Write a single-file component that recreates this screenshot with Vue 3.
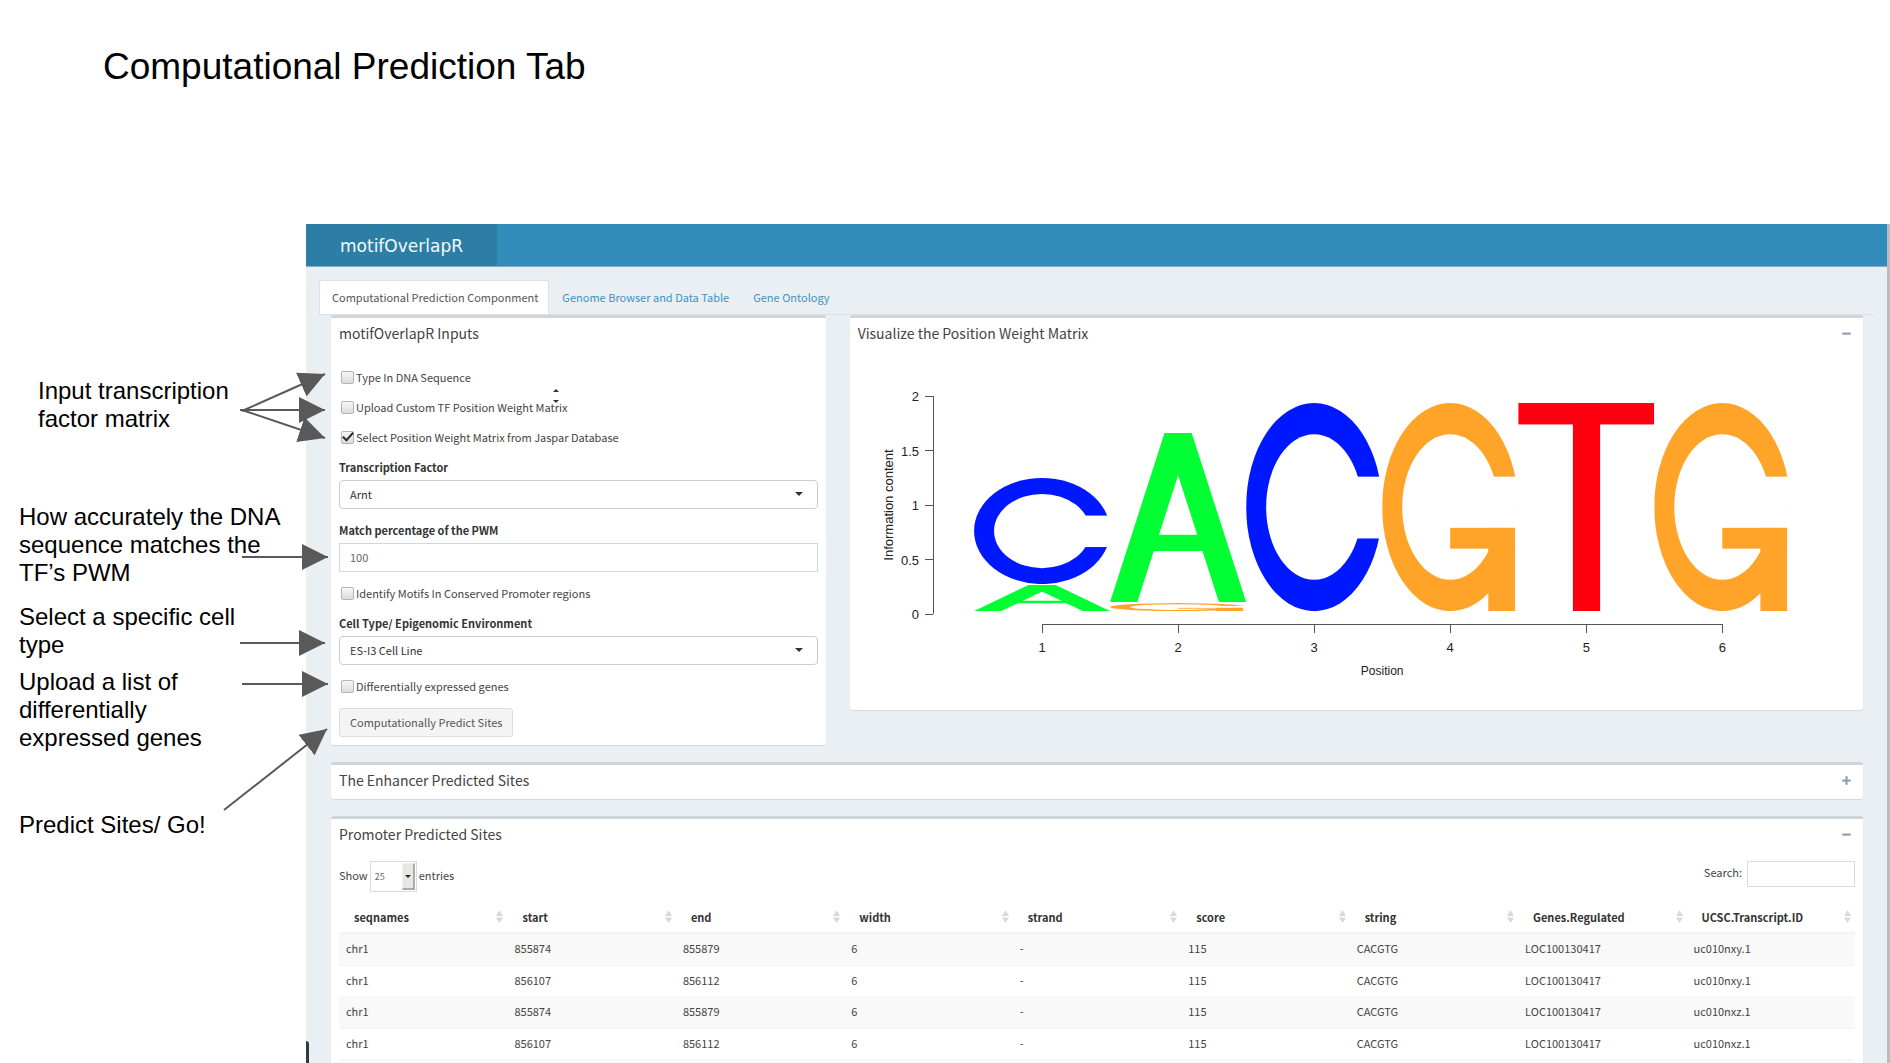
<script setup>
import { ref } from 'vue'

const notes = [
  { text: 'Input transcription\nfactor matrix', kind: 'first' },
  { text: 'How accurately the DNA\nsequence matches the\nTF’s PWM', kind: 'match' },
  { text: 'Select a specific cell\ntype', kind: 'cell' },
  { text: 'Upload a list of\ndifferentially\nexpressed genes', kind: 'genes' },
  { text: 'Predict Sites/ Go!', kind: 'go' },
]

const arrows = [
  [242, 411, 325, 374],
  [240, 410, 325, 410],
  [242, 410, 325, 438],
  [242, 557, 328, 557],
  [240, 643, 325, 643],
  [242, 684, 328, 684],
  [224, 810, 327, 729],
]

const tabs = ['Computational Prediction Componment', 'Genome Browser and Data Table', 'Gene Ontology']

const typeSequence = ref(false)
const uploadMatrix = ref(false)
const jaspar = ref(true)
const conserved = ref(false)
const diffGenes = ref(false)
const factor = ref('Arnt')
const match = ref('100')
const cell = ref('ES-I3 Cell Line')
const pageSize = ref('25')
const search = ref('')

// Plot geometry, in viewBox units
const zeroY = 262
const unitY = 109
const firstX = 184
const stepX = 136
const yTicks = [2, 1.5, 1, 0.5, 0]
const positions = [1, 2, 3, 4, 5, 6]
const px = (n) => firstX + (n - 1) * stepX
const py = (v) => zeroY - v * unitY

const colors = { A: '#00ff33', C: '#0018ff', G: '#ffa428', T: '#ff0010' }
const stacks = [
  { base: 'C', pos: 1, top: 126, height: 106 },
  { base: 'A', pos: 1, top: 233, height: 26 },
  { base: 'A', pos: 2, top: 81, height: 169 },
  { base: 'G', pos: 2, top: 251, height: 8 },
  { base: 'C', pos: 3, top: 51, height: 208 },
  { base: 'G', pos: 4, top: 51, height: 208 },
  { base: 'T', pos: 5, top: 51, height: 208 },
  { base: 'G', pos: 6, top: 51, height: 208 },
]

const columns = ['seqnames', 'start', 'end', 'width', 'strand', 'score', 'string', 'Genes.Regulated', 'UCSC.Transcript.ID']
const rows = [
  ['chr1', '855874', '855879', '6', '-', '115', 'CACGTG', 'LOC100130417', 'uc010nxy.1'],
  ['chr1', '856107', '856112', '6', '-', '115', 'CACGTG', 'LOC100130417', 'uc010nxy.1'],
  ['chr1', '855874', '855879', '6', '-', '115', 'CACGTG', 'LOC100130417', 'uc010nxz.1'],
  ['chr1', '856107', '856112', '6', '-', '115', 'CACGTG', 'LOC100130417', 'uc010nxz.1'],
]
</script>

<template>
  <div class="slide">
    <h1 class="slide-title">Computational Prediction Tab</h1>

    <div class="stage">
      <aside class="notes">
        <p v-for="n in notes" :key="n.kind" class="note" :class="n.kind">{{ n.text }}</p>
      </aside>

      <div class="app">
        <header class="topbar">
          <div class="brand">motifOverlapR</div>
        </header>

        <nav class="tabs">
          <a v-for="(t, i) in tabs" :key="t" href="#" class="tab" :class="{ active: i === 0 }">{{ t }}</a>
        </nav>

        <div class="row split">
          <section class="box">
            <div class="box-head"><h2>motifOverlapR Inputs</h2></div>
            <form class="form" @submit.prevent>
              <label class="check"><input v-model="typeSequence" type="checkbox" />Type In DNA Sequence</label>
              <label class="check"><input v-model="uploadMatrix" type="checkbox" />Upload Custom TF Position Weight Matrix
                <span class="spin"></span></label>
              <label class="check"><input v-model="jaspar" type="checkbox" />Select Position Weight Matrix from Jaspar Database</label>
              <div class="field">
                <label for="factor">Transcription Factor</label>
                <div class="picker">
                  <select id="factor" v-model="factor"><option>Arnt</option></select>
                </div>
              </div>
              <div class="field">
                <label for="match">Match percentage of the PWM</label>
                <input id="match" v-model="match" class="text" type="text" />
              </div>
              <label class="check"><input v-model="conserved" type="checkbox" />Identify Motifs In Conserved Promoter regions</label>
              <div class="field">
                <label for="cell">Cell Type/ Epigenomic Environment</label>
                <div class="picker">
                  <select id="cell" v-model="cell"><option>ES-I3 Cell Line</option></select>
                </div>
              </div>
              <label class="check"><input v-model="diffGenes" type="checkbox" />Differentially expressed genes</label>
              <button class="go-button" type="submit">Computationally Predict Sites</button>
            </form>
          </section>

          <section class="box">
            <div class="box-head">
              <h2>Visualize the Position Weight Matrix</h2>
              <button class="tool" type="button" aria-label="Collapse">
                <svg viewBox="0 0 8 8"><rect y="3" width="8" height="2" rx="1" /></svg>
              </button>
            </div>
            <svg class="plot" viewBox="0 0 997 350" role="img" aria-label="Sequence logo for CACGTG">
              <g class="axis">
                <line x1="75" :y1="py(2)" x2="75" :y2="py(0)" />
                <line v-for="v in yTicks" :key="v" x1="67" :y1="py(v)" x2="75" :y2="py(v)" />
                <line :x1="px(1)" y1="272" :x2="px(6)" y2="272" />
                <line v-for="p in positions" :key="p" :x1="px(p)" y1="272" :x2="px(p)" y2="281" />
              </g>
              <text v-for="v in yTicks" :key="'y' + v" class="num" x="61" :y="py(v) + 5" text-anchor="end">{{ v }}</text>
              <text v-for="p in positions" :key="'x' + p" class="num" :x="px(p)" y="300" text-anchor="middle">{{ p }}</text>
              <text class="num" text-anchor="middle" transform="translate(35 153) rotate(-90)">Information content</text>
              <text class="name" x="524" y="323" text-anchor="middle">Position</text>

              <!-- Information stacks: one mark per base, its height is the base's share -->
              <svg
                v-for="(s, i) in stacks"
                :key="i"
                :x="px(s.pos) - 68"
                :y="s.top"
                width="136"
                :height="s.height"
                viewBox="0 0 100 100"
                preserveAspectRatio="none"
                :fill="colors[s.base]"
                :stroke="colors[s.base]"
              >
                <g v-if="s.base === 'C' || s.base === 'G'" stroke="none">
                  <ellipse cx="50" cy="50" rx="50" ry="50" />
                  <ellipse cx="50" cy="50" rx="35.3" ry="35" fill="#fff" />
                  <rect x="50" y="35.4" width="54" height="29.7" fill="#fff" />
                  <template v-if="s.base === 'G'">
                    <rect x="50" y="60" width="47.8" height="10" />
                    <rect x="78" y="60" width="19.8" height="40" />
                    <rect x="97.8" y="35" width="6" height="65" fill="#fff" />
                  </template>
                </g>
                <g v-else-if="s.base === 'A'" stroke-width="18.6">
                  <line x1="54" y1="-10" x2="6" y2="110" />
                  <line x1="46" y1="-10" x2="94" y2="110" />
                  <rect x="30" y="60.2" width="40" height="9.6" stroke="none" />
                </g>
                <g v-else stroke="none">
                  <rect width="100" height="10.3" />
                  <rect x="40.2" width="20" height="100" />
                </g>
              </svg>
            </svg>
          </section>
        </div>

        <div class="row">
          <section class="box">
            <div class="box-head">
              <h2>The Enhancer Predicted Sites</h2>
              <button class="tool" type="button" aria-label="Expand">
                <svg viewBox="0 0 8 8"><rect y="3" width="8" height="2" rx="1" /><rect x="3" width="2" height="8" rx="1" /></svg>
              </button>
            </div>
          </section>
        </div>

        <div class="row">
          <section class="box">
            <div class="box-head">
              <h2>Promoter Predicted Sites</h2>
              <button class="tool" type="button" aria-label="Collapse">
                <svg viewBox="0 0 8 8"><rect y="3" width="8" height="2" rx="1" /></svg>
              </button>
            </div>
            <div class="controls">
              <label class="length">Show
                <span class="length-picker"><select v-model="pageSize"><option>25</option></select></span>
                entries</label>
              <label class="search">Search:<input v-model="search" type="search" /></label>
            </div>
            <table class="data">
              <thead>
                <tr>
                  <th v-for="c in columns" :key="c" scope="col">
                    <div class="th">
                      <span>{{ c }}</span>
                      <svg viewBox="0 0 7 13"><path d="M0 6 3.500 0 7 6zM0 7.500 3.500 13 7 7.500z" /></svg>
                    </div>
                  </th>
                </tr>
              </thead>
              <tbody>
                <tr v-for="(r, i) in rows" :key="i">
                  <td v-for="(v, j) in r" :key="j">{{ v }}</td>
                </tr>
                <tr aria-hidden="true"><td v-for="c in columns" :key="c"></td></tr>
              </tbody>
            </table>
          </section>
        </div>
        <span class="drawer"></span>
      </div>
    </div>

    <svg class="arrows" aria-hidden="true">
      <defs>
        <marker id="head" viewBox="0 0 26 26" refX="26" refY="13" markerWidth="26" markerHeight="26" markerUnits="userSpaceOnUse" orient="auto">
          <path d="M0 0 26 13 0 26z" fill="#595959" />
        </marker>
      </defs>
      <line v-for="(a, i) in arrows" :key="i" :x1="a[0]" :y1="a[1]" :x2="a[2]" :y2="a[3]" marker-end="url(#head)" />
    </svg>
  </div>
</template>

<style>
body {
  margin: 0;
  background: #fff;
}
</style>

<style scoped>
*,
*::before,
*::after {
  box-sizing: border-box;
}
.slide {
  position: relative;
  display: flex;
  flex-direction: column;
  height: 100vh;
  overflow: hidden;
  font-family: 'Liberation Sans', Arial, sans-serif;
  color: #000;
}
.slide-title {
  flex: none;
  margin: 0;
  padding: 47px 0 137px 103px;
  font-size: 37px;
  line-height: 40px;
  font-weight: 400;
}
.stage {
  flex: 1;
  min-height: 0;
  display: grid;
  grid-template-columns: 306px 1fr;
  grid-template-rows: minmax(0, 1fr);
}
.note {
  margin: 0 0 0 19px;
  font-size: 24px;
  line-height: 28px;
  white-space: pre-line;
}
.note.first {
  margin-top: 153px;
  margin-left: 38px;
}
.note.match {
  margin-top: 70px;
}
.note.cell {
  margin-top: 16px;
}
.note.genes {
  margin-top: 9px;
}
.note.go {
  margin-top: 59px;
}
.arrows {
  position: absolute;
  inset: 0;
  width: 100%;
  height: 100%;
  pointer-events: none;
}
.arrows line {
  stroke: #595959;
  stroke-width: 2;
}

.app {
  position: relative;
  min-width: 0;
  overflow: hidden;
  background: #e9eff3;
  border-right: 3px solid #b8bdbe;
  font-family: 'Noto Sans CJK SC', 'Noto Sans', sans-serif;
  font-size: 11px;
  line-height: 18px;
  color: #444;
}
.topbar {
  height: 43px;
  background: #318cb9;
  border-bottom: 1px solid #7cb0cc;
}
.brand {
  width: 191px;
  height: 42px;
  background: #2d7ea5;
  color: #f4fafd;
  font-family: 'DejaVu Sans', sans-serif;
  font-size: 17px;
  line-height: 44px;
  text-align: center;
}
.tabs {
  display: flex;
  margin: 13px 12px 0 13px;
  border-bottom: 1px solid #dde1e4;
}
.tab {
  padding: 7px 10px 8px 12px;
  border: 1px solid transparent;
  border-bottom: 0;
  border-radius: 3px 3px 0 0;
  color: #3f93c0;
  text-decoration: none;
}
.tab.active {
  background: #fff;
  border-color: #dde1e4;
  color: #555;
}
.row {
  margin: 0 12px 17px 13px;
  padding: 0 12px;
}
.split {
  padding: 0;
  display: grid;
  grid-template-columns: 1fr 2fr;
  align-items: start;
}
.split .box {
  margin: 0 12px;
}
.box {
  background: #fff;
  border-top: 3px solid #d0d5db;
  border-radius: 3px;
  box-shadow: 0 1px 1px rgba(0, 0, 0, 0.1);
}
.box-head {
  display: flex;
  justify-content: space-between;
  align-items: center;
  height: 34px;
  padding: 0 8px 4px;
}
h2 {
  margin: 0;
  font-size: 14px;
  line-height: 30px;
  font-weight: 400;
}
.tool {
  display: flex;
  padding: 4px;
  border: 0;
  background: none;
}
.tool svg {
  width: 9px;
  height: 9px;
  fill: #94a0b4;
}
.form {
  display: flex;
  flex-direction: column;
  align-items: stretch;
  gap: 12px;
  padding: 16px 8px 8px;
}
.check {
  position: relative;
  display: flex;
  align-items: center;
  gap: 2px;
  align-self: flex-start;
  padding-left: 2px;
}
.check input {
  appearance: none;
  position: relative;
  width: 13px;
  height: 13px;
  margin: 0;
  border: 1px solid #b4b4b4;
  border-radius: 2px;
  background: linear-gradient(#f6f6f6, #dcdcdc);
}
.check input:checked::after {
  content: '';
  position: absolute;
  left: 3px;
  top: -2px;
  width: 6px;
  height: 11px;
  border: solid #2b2b2b;
  border-width: 0 2px 2px 0;
  transform: rotate(42deg);
}
.spin {
  position: absolute;
  right: 8px;
  top: -9px;
  width: 6px;
  height: 14px;
}
.spin::before,
.spin::after {
  content: '';
  position: absolute;
  left: 0;
  border: 3px solid transparent;
}
.spin::before {
  top: -3px;
  border-bottom-color: #333;
}
.spin::after {
  bottom: -3px;
  border-top-color: #333;
}
.field {
  display: flex;
  flex-direction: column;
  gap: 4px;
}
.field label {
  font-weight: 700;
  color: #333;
}
.picker {
  position: relative;
}
select,
input,
button {
  font: inherit;
  color: inherit;
}
.picker select,
.text {
  display: block;
  width: 100%;
  height: 29px;
  padding: 0 10px 2px;
  border: 1px solid #ccc;
  background: #fff;
  outline: 0;
}
.picker select {
  appearance: none;
  border-radius: 4px;
  color: #333;
}
.text {
  border-color: #d2d6de;
  color: #666;
}
.picker::after {
  content: '';
  position: absolute;
  right: 15px;
  top: 12px;
  border: 4px solid transparent;
  border-top-color: #333;
  border-bottom: 0;
}
.go-button {
  align-self: flex-start;
  height: 29px;
  margin-top: 1px;
  padding: 0 10px 2px;
  border: 1px solid #ddd;
  border-radius: 3px;
  background: #f4f4f4;
  color: #555;
}
.plot {
  display: block;
  width: calc(100% - 16px);
  margin: 0 8px;
  padding-bottom: 8px;
  box-sizing: content-box;
  font-family: 'Liberation Sans', Arial, sans-serif;
}
.axis {
  stroke: #555;
  stroke-width: 1;
  shape-rendering: crispEdges;
}
.num {
  font-size: 13px;
  fill: #222;
}
.name {
  font-size: 12px;
  fill: #222;
}
.controls {
  display: flex;
  justify-content: space-between;
  align-items: flex-start;
  padding: 8px 8px 0;
}
.length,
.search {
  display: flex;
  align-items: flex-start;
}
.length {
  gap: 2px;
  line-height: 28px;
}
.search {
  gap: 5px;
  line-height: 23px;
}
.length-picker {
  position: relative;
}
.length-picker select {
  appearance: none;
  display: block;
  width: 47px;
  height: 31px;
  padding: 0 4px;
  border: 1px solid #d8dce0;
  background: #fff;
  font-size: 9px;
  color: #666;
}
.length-picker::before {
  content: '';
  position: absolute;
  right: 2px;
  top: 2px;
  width: 13px;
  height: 27px;
  border: 1px solid #f0f0f0;
  border-right: 2px solid #aaa;
  border-bottom: 2px solid #aaa;
  background: #e6e6e4;
}
.length-picker::after {
  content: '';
  position: absolute;
  right: 6px;
  top: 14px;
  border: 3px solid transparent;
  border-top-color: #222;
  border-bottom: 0;
}
.search input {
  appearance: none;
  width: 108px;
  height: 26px;
  padding: 0 4px;
  border: 1px solid #d8dce0;
  background: #fff;
}
.data {
  width: calc(100% - 16px);
  margin: 9px 8px 0;
  border-collapse: collapse;
  table-layout: fixed;
}
th {
  height: 32px;
  padding: 0 4px 0 15px;
  border-bottom: 2px solid #f4f4f4;
  text-align: left;
  color: #333;
}
.th {
  display: flex;
  justify-content: space-between;
  align-items: center;
}
.th svg {
  width: 7px;
  height: 13px;
  fill: #d9d9d9;
}
td {
  height: 31px;
  padding: 0 7px 2px;
  border-top: 1px solid #f4f4f4;
}
tbody tr:nth-child(odd) td {
  height: 32px;
  background: #f9f9f9;
}
.drawer {
  position: absolute;
  left: 0;
  bottom: 0;
  width: 3px;
  height: 22px;
  border-radius: 0 3px 0 0;
  background: #333b3e;
}
</style>
